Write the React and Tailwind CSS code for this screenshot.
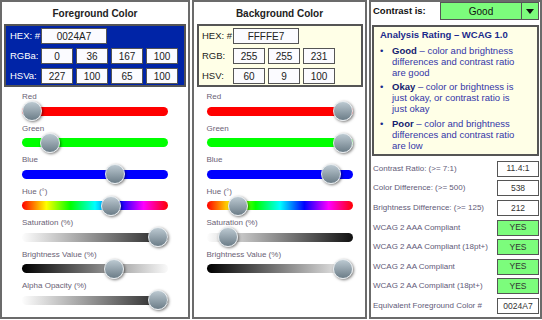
import React from 'react';

const Thumb = ({ pct }) => (
  <div
    className="absolute top-0 w-[20px] h-[20px] rounded-full border border-[#e6ebee] bg-[linear-gradient(to_bottom,#bcc9d1,#6c7d88)] shadow-[1px_1px_3px_rgba(0,0,0,0.55)]"
    style={{ left: `${pct * 126}px` }}
  />
);

const Slider = ({ label, track, pct }) => (
  <div className="h-[31.5px] flex flex-col items-center">
    <div className="w-[146px] h-[10px] text-[8px] leading-[10px] text-[#6a6275] whitespace-nowrap">{label}</div>
    <div className="relative w-[146px] h-[20px] -mt-[1px] flex items-center">
      <div className={`w-full h-[9px] rounded-full ${track}`} />
      <Thumb pct={pct} />
    </div>
  </div>
);

const Field = ({ value, wide }) => (
  <div
    className={`${wide ? 'w-[66px]' : 'w-[32px]'} h-[16px] bg-[#fbfbff] border-[1.5px] border-[#555] flex items-center justify-center text-[10px] text-[#222]`}
  >
    {value}
  </div>
);

const ColorRow = ({ label, light, children }) => (
  <div className="flex items-center h-[16px]">
    <div className={`w-[31px] text-[9.5px] ${light ? 'text-white' : 'text-[#222]'}`}>{label}</div>
    <div className="flex gap-[3px]">{children}</div>
  </div>
);

const HUE = 'bg-[linear-gradient(to_right,#f00,#ff0,#0f0,#0ff,#00f,#f0f,#f00)]';

const rows = [
  ['Contrast Ratio: (>= 7:1)', '11.4:1', false],
  ['Color Difference: (>= 500)', '538', false],
  ['Brightness Difference: (>= 125)', '212', false],
  ['WCAG 2 AAA Compliant', 'YES', true],
  ['WCAG 2 AAA Compliant (18pt+)', 'YES', true],
  ['WCAG 2 AA Compliant', 'YES', true],
  ['WCAG 2 AA Compliant (18pt+)', 'YES', true],
  ['Equivalent Foreground Color #', '0024A7', false],
];

const ratings = [
  ['Good', ['color and brightness', 'differences and contrast ratio', 'are good']],
  ['Okay', ['color or brightness is', 'just okay, or contrast ratio is', 'just okay']],
  ['Poor', ['color and brightness', 'differences and contrast ratio', 'are low']],
];

export default function App() {
  return (
    <div className="w-[542px] h-[320px] bg-white flex gap-[2px] font-['Liberation_Sans',Arial,sans-serif] overflow-hidden">
      {/* foreground */}
      <div className="w-[190px] h-[319px] border-2 border-[#6b6b6b] flex flex-col">
        <div className="h-[22px] flex items-center justify-center text-[10px] font-bold text-[#222]">
          Foreground Color
        </div>
        <div className="mx-[2px] h-[63px] bg-[#0024a7] border-2 border-[#555] pt-[2px] pl-[4px] flex flex-col gap-[4px]">
          <ColorRow label="HEX: #" light>
            <Field value="0024A7" wide />
          </ColorRow>
          <ColorRow label="RGBa:" light>
            <Field value="0" />
            <Field value="36" />
            <Field value="167" />
            <Field value="100" />
          </ColorRow>
          <ColorRow label="HSVa:" light>
            <Field value="227" />
            <Field value="100" />
            <Field value="65" />
            <Field value="100" />
          </ColorRow>
        </div>
        <div className="mt-[5px]">
          <Slider label="Red" track="bg-[#ff0000]" pct={0} />
          <Slider label="Green" track="bg-[#00ff00]" pct={36 / 255} />
          <Slider label="Blue" track="bg-[#0000ff]" pct={167 / 255} />
          <Slider label="Hue (°)" track={HUE} pct={227 / 360} />
          <Slider label="Saturation (%)" track="bg-[linear-gradient(to_right,#fdfdfd,#1e1e1e)]" pct={1} />
          <Slider label="Brightness Value (%)" track="bg-[linear-gradient(to_right,#000,#fafafa)]" pct={0.65} />
          <Slider label="Alpha Opacity (%)" track="bg-[linear-gradient(to_right,#fdfdfd,#1e1e1e)]" pct={1} />
        </div>
      </div>

      {/* background */}
      <div className="w-[175px] h-[319px] border-2 border-[#6b6b6b] flex flex-col">
        <div className="h-[22px] flex items-center justify-center text-[10px] font-bold text-[#222]">
          Background Color
        </div>
        <div className="ml-[3px] mr-[2px] h-[63px] bg-[#ffffe7] border-2 border-[#555] pt-[2px] pl-[3px] flex flex-col gap-[4px]">
          <ColorRow label="HEX: #">
            <Field value="FFFFE7" wide />
          </ColorRow>
          <ColorRow label="RGB:">
            <Field value="255" />
            <Field value="255" />
            <Field value="231" />
          </ColorRow>
          <ColorRow label="HSV:">
            <Field value="60" />
            <Field value="9" />
            <Field value="100" />
          </ColorRow>
        </div>
        <div className="mt-[5px]">
          <Slider label="Red" track="bg-[#ff0000]" pct={1} />
          <Slider label="Green" track="bg-[#00ff00]" pct={1} />
          <Slider label="Blue" track="bg-[#0000ff]" pct={231 / 255} />
          <Slider label="Hue (°)" track={HUE} pct={60 / 360} />
          <Slider label="Saturation (%)" track="bg-[linear-gradient(to_right,#fdfdfd,#111)]" pct={0.09} />
          <Slider label="Brightness Value (%)" track="bg-[linear-gradient(to_right,#000,#fafafa)]" pct={1} />
        </div>
      </div>

      {/* analysis */}
      <div className="w-[173px] h-[319px] border-2 border-[#6b6b6b] flex flex-col">
        <div className="h-[18px] flex items-center">
          <div className="pl-[2px] text-[9.5px] font-bold text-[#111]">Contrast is:</div>
          <div className="ml-auto mr-[1px] w-[99px] h-[18px] bg-[#7cfc7c] border border-[#555] flex">
            <div className="flex-1 flex items-center justify-center text-[10px] text-[#111]">Good</div>
            <div className="w-[17px] border-l border-[#555] flex items-center justify-center">
              <div className="w-0 h-0 border-l-[4px] border-r-[4px] border-t-[5px] border-l-transparent border-r-transparent border-t-[#111]" />
            </div>
          </div>
        </div>
        <div className="mt-[5px] mx-[1px] h-[131px] bg-[#ffffe7] border-2 border-[#555] pt-[2px] pl-[6px]">
          <div className="text-[9.5px] leading-[11px] font-bold text-[#1a2a8c]">Analysis Rating – WCAG 1.0</div>
          <div className="mt-[4.5px] flex flex-col gap-[3.5px]">
            {ratings.map(([term, lines]) => (
              <div key={term} className="flex text-[9.5px] leading-[11px]">
                <div className="w-[12px] text-[#1a2a8c]">•</div>
                <div className="text-[#3436a8] whitespace-nowrap">
                  <span className="font-bold text-[#14216e]">{term}</span> – {lines[0]}
                  <br />
                  {lines[1]}
                  <br />
                  {lines[2]}
                </div>
              </div>
            ))}
          </div>
        </div>
        <div className="mt-[3px]">
          {rows.map(([label, value, ok]) => (
            <div key={label} className="h-[19.6px] flex items-center pl-[2px]">
              <div className="text-[8px] text-[#5f5a78] whitespace-nowrap">{label}</div>
              <div
                className={`ml-auto mr-[1px] w-[42px] h-[16px] border-[1.5px] border-[#555] flex items-center justify-center text-[8.5px] text-[#333] ${ok ? 'bg-[#7cfc7c]' : 'bg-white'}`}
              >
                {value}
              </div>
            </div>
          ))}
        </div>
      </div>
    </div>
  );
}
